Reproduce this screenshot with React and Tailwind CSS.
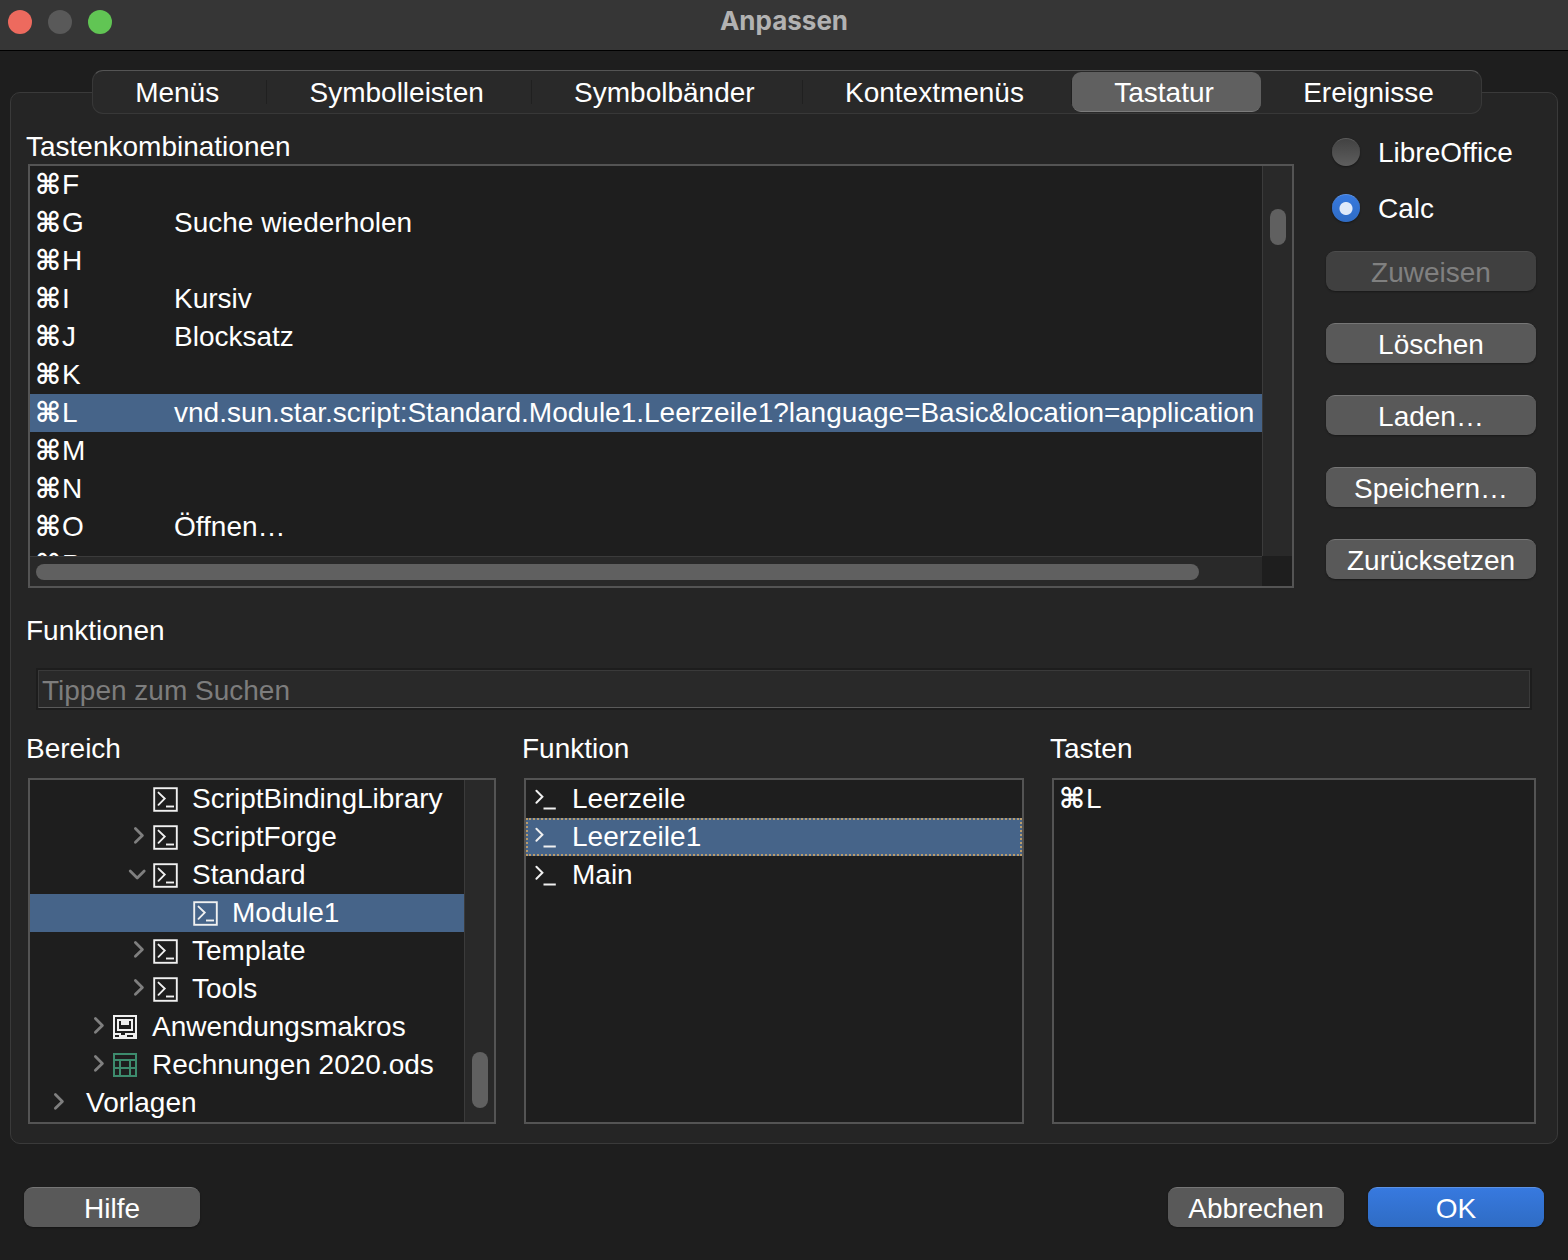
import { clsx } from 'clsx'

const tabs = ['Menüs', 'Symbolleisten', 'Symbolbänder', 'Kontextmenüs', 'Tastatur', 'Ereignisse']

const shortcuts = [
  { keys: 'F', action: '' },
  { keys: 'G', action: 'Suche wiederholen' },
  { keys: 'H', action: '' },
  { keys: 'I', action: 'Kursiv' },
  { keys: 'J', action: 'Blocksatz' },
  { keys: 'K', action: '' },
  {
    keys: 'L',
    action: 'vnd.sun.star.script:Standard.Module1.Leerzeile1?language=Basic&location=application',
    selected: true,
  },
  { keys: 'M', action: '' },
  { keys: 'N', action: '' },
  { keys: 'O', action: 'Öffnen…' },
  { keys: 'P', action: '' },
]

const tree = [
  { label: 'ScriptBindingLibrary', level: 2, icon: 'script' },
  { label: 'ScriptForge', level: 2, icon: 'script', chevron: 'right' },
  { label: 'Standard', level: 2, icon: 'script', chevron: 'down' },
  { label: 'Module1', level: 3, icon: 'script', selected: true },
  { label: 'Template', level: 2, icon: 'script', chevron: 'right' },
  { label: 'Tools', level: 2, icon: 'script', chevron: 'right' },
  { label: 'Anwendungsmakros', level: 1, icon: 'app', chevron: 'right' },
  { label: 'Rechnungen 2020.ods', level: 1, icon: 'sheet', chevron: 'right' },
  { label: 'Vorlagen', level: 0, chevron: 'right' },
]

const indents = ['pl-[15px]', 'pl-[55px]', 'pl-[95px]', 'pl-[135px]']

const functions = [{ label: 'Leerzeile' }, { label: 'Leerzeile1', selected: true }, { label: 'Main' }]

function Chevron({ dir }) {
  return (
    <svg className="size-6 shrink-0" viewBox="0 0 24 24" fill="none" stroke="#7f7f7f" strokeWidth="2.8" strokeLinecap="round" strokeLinejoin="round">
      {dir === 'right' && <path d="M10.4 3.6 17.4 10.4 10.4 17.2" />}
      {dir === 'down' && <path d="M5.2 8 12.2 15 19.2 8" />}
    </svg>
  )
}

function ScriptIcon() {
  return (
    <svg className="size-[26px] shrink-0" viewBox="0 0 26 26" fill="none" stroke="#f0f0f0">
      <rect x="1.2" y="2.2" width="22.6" height="22.6" strokeWidth="1.9" />
      <path d="M5.5 6.6 11.7 12.6 5.5 18.8" strokeWidth="1.9" strokeLinecap="round" />
      <path d="M13 20.5H21" strokeWidth="1.9" />
    </svg>
  )
}

function FunctionIcon() {
  return (
    <svg className="size-[26px] shrink-0" viewBox="0 0 26 26" fill="none" stroke="#f0f0f0" strokeWidth="2">
      <path d="M3.4 4.8 9.4 10.8 3.4 16.8" strokeLinecap="round" />
      <path d="M10.5 22.5H22.8" />
    </svg>
  )
}

function AppIcon() {
  return (
    <svg className="size-[26px] shrink-0" viewBox="0 0 26 26" shapeRendering="crispEdges">
      <rect y="1" width="24" height="24" fill="#f0f0f0" />
      <path d="M2 3h20v16H2z M4 5v12h16V5z" fill="#1e1e1e" fillRule="evenodd" />
      <path d="M6 7h2v4h8V7h2v8H6z" fill="#1e1e1e" />
      <path d="M8 19h4v2H8z M2 21h4v2H2z M14 21h6v2h-6z" fill="#1e1e1e" />
    </svg>
  )
}

function SheetIcon() {
  return (
    <svg className="size-[26px] shrink-0" viewBox="0 0 26 26" fill="none" stroke="#3d8b6d" strokeWidth="2" shapeRendering="crispEdges">
      <rect x="1" y="2" width="22" height="22" />
      <path d="M0 8H24M0 16H24M7 8V24M17 8V24" />
    </svg>
  )
}

const icons = { script: ScriptIcon, app: AppIcon, sheet: SheetIcon }

function Shortcut({ keys }) {
  return (
    <span className="flex items-center">
      <span className="w-7 text-center font-['DejaVu_Sans',sans-serif] text-[28px] font-bold">⌘</span>
      {keys}
    </span>
  )
}

function Button({ children, className, primary, disabled }) {
  return (
    <button
      type="button"
      disabled={disabled}
      className={clsx(
        'h-10 rounded-[9px] border-t pt-0.5 text-center leading-9 shadow-[0_1px_2px_rgba(0,0,0,0.35)]',
        primary && 'border-[#5c92e4] bg-linear-to-b from-[#3779df] to-[#2f6cc4] text-white',
        disabled && 'border-[#4c4c4c] bg-[#404040] text-[#808080]',
        !primary && !disabled && 'border-[#767676] bg-[#595959] text-white',
        className,
      )}
    >
      {children}
    </button>
  )
}

function Radio({ label, checked }) {
  return (
    <label className="flex h-[34px] items-center gap-[18px] pl-1.5">
      <input
        type="radio"
        name="scope"
        defaultChecked={checked}
        className="mb-0.5 size-7 appearance-none rounded-full border-t border-[#5c5c5c] bg-linear-to-b from-[#424242] to-[#5e5e5e] shadow-[0_1px_2px_rgba(0,0,0,0.4)] checked:border-[#5c92e4] checked:bg-[radial-gradient(circle,#dfe9f9_6px,transparent_7px),linear-gradient(#3779df,#2f6cc4)]"
      />
      {label}
    </label>
  )
}

export default function App() {
  return (
    <div className="flex min-h-screen flex-col bg-[#1e1e1e] font-['Liberation_Sans','DejaVu_Sans',sans-serif] text-[28px] leading-[34px] text-white">
      <header className="flex h-[51px] items-center border-b border-black bg-[#363636] px-2 pb-1.5">
        <div className="flex gap-4">
          <button type="button" aria-label="Schließen" className="size-6 rounded-full bg-[#ed6a5e]" />
          <button type="button" aria-label="Minimieren" className="size-6 rounded-full bg-[#595959]" />
          <button type="button" aria-label="Zoomen" className="size-6 rounded-full bg-[#61c554]" />
        </div>
        <h1 className="flex-1 pr-26 pb-0.5 text-center font-['Inter',sans-serif] text-[26px] font-bold text-[#b2b2b2]">Anpassen</h1>
      </header>

      <main className="flex flex-1 flex-col px-2.5 pt-[19px]">
        {/* Tab strip sits on the top edge of the panel */}
        <div role="tablist" className="z-10 mr-[76px] ml-[82px] flex h-11 rounded-[11px] border border-[#383838] border-t-[#545454] bg-[#292929]">
          {tabs.map((tab, i) => (
            <div key={tab} className="flex flex-auto items-center">
              <button
                type="button"
                role="tab"
                aria-selected={tab === 'Tastatur'}
                className={clsx('h-10 flex-auto rounded-[9px] pt-0.5 pr-11 pl-[39px]', tab === 'Tastatur' && 'border-b border-[#7c7c7c] bg-[#606060]')}
              >
                {tab}
              </button>
              {i < 4 && <span className="h-6 w-px bg-[#202020]" />}
            </div>
          ))}
        </div>

        <section className="-mt-[22px] rounded-[10px] border border-[#3a3a3a] bg-[#252525] pt-[37px] pr-[21px] pb-[19px] pl-[17px]">
          <div className="flex gap-8">
            <div className="min-w-0 flex-1">
              <h2 className="-ml-0.5">Tastenkombinationen</h2>
              <div className="border-2 border-[#545454] bg-[#1e1e1e]">
                <div className="flex h-[390px]">
                  <div className="min-w-0 flex-1 overflow-hidden">
                    <table className="w-full table-fixed">
                      <tbody>
                        {shortcuts.map((row) => (
                          <tr key={row.keys} className={clsx('h-[38px]', row.selected && 'bg-[#466489]')}>
                            <td className="w-36 pl-1">
                              <Shortcut keys={row.keys} />
                            </td>
                            <td className="whitespace-nowrap">{row.action}</td>
                          </tr>
                        ))}
                      </tbody>
                    </table>
                  </div>
                  <div className="w-[30px] border-l border-[#3b3b3b] bg-[#292929] pt-[43px] pl-[7px]">
                    <div className="h-9 w-4 rounded-full bg-[#606060]" />
                  </div>
                </div>
                <div className="mr-[30px] h-[30px] border-t border-[#3b3b3b] bg-[#292929] pt-[7px] pr-[63px] pl-1.5">
                  <div className="h-4 rounded-full bg-[#606060]" />
                </div>
              </div>
            </div>

            <div className="flex w-[210px] flex-col pt-1.5">
              <Radio label="LibreOffice" />
              <div className="mt-[22px]">
                <Radio label="Calc" checked />
              </div>
              <div className="mt-[25px] flex flex-col gap-8">
                <Button disabled>Zuweisen</Button>
                <Button>Löschen</Button>
                <Button>Laden…</Button>
                <Button>Speichern…</Button>
                <Button>Zurücksetzen</Button>
              </div>
            </div>
          </div>

          <label htmlFor="search" className="mt-[26px] -ml-0.5 block">
            Funktionen
          </label>
          <div className="mt-5 mr-1 ml-2 border-2 border-[#1d1d1d]">
            <input
              id="search"
              type="text"
              placeholder="Tippen zum Suchen"
              className="block h-[38px] w-full border border-[#3a3a3a] border-b-[#5a5a5a] bg-[#292929] pt-1 pl-[3px] outline-none placeholder:text-[#7d7d7d]"
            />
          </div>

          <div className="mt-[22px] grid grid-cols-[468fr_500fr_484fr] gap-7">
            <div>
              <h2 className="mb-3 -ml-0.5">Bereich</h2>
              <div className="flex h-[346px] border-2 border-[#545454] bg-[#1e1e1e]">
                <ul role="tree" aria-label="Bereich" className="min-w-0 flex-1">
                  {tree.map(({ label, level, icon, chevron, selected }) => {
                    const Icon = icons[icon]
                    return (
                      <li
                        key={label}
                        role="treeitem"
                        aria-selected={!!selected}
                        className={clsx('flex h-[38px] items-center whitespace-nowrap', indents[level], selected && 'bg-[#466489]')}
                      >
                        <Chevron dir={chevron} />
                        <span className="flex items-center gap-[13px] pl-1">
                          {Icon ? <Icon /> : <i />}
                          {label}
                        </span>
                      </li>
                    )
                  })}
                </ul>
                <div className="flex w-[30px] items-end border-l border-[#3b3b3b] bg-[#292929] pb-3.5 pl-[7px]">
                  <div className="h-14 w-4 rounded-full bg-[#606060]" />
                </div>
              </div>
            </div>

            <div>
              <h2 className="mb-3 -ml-0.5">Funktion</h2>
              <ul role="listbox" aria-label="Funktion" className="h-[346px] border-2 border-[#545454] bg-[#1e1e1e]">
                {functions.map(({ label, selected }) => (
                  <li
                    key={label}
                    role="option"
                    aria-selected={!!selected}
                    className={clsx(
                      'flex h-[38px] items-center gap-[13px] pl-[7px]',
                      selected && 'bg-[#466489] outline-2 -outline-offset-2 outline-dotted outline-[#b99b6b]',
                    )}
                  >
                    <FunctionIcon />
                    {label}
                  </li>
                ))}
              </ul>
            </div>

            <div>
              <h2 className="mb-3 -ml-0.5">Tasten</h2>
              <ul role="listbox" aria-label="Tasten" className="h-[346px] border-2 border-[#545454] bg-[#1e1e1e]">
                <li role="option" aria-selected={false} className="flex h-[38px] items-center pl-1">
                  <Shortcut keys="L" />
                </li>
              </ul>
            </div>
          </div>
        </section>
      </main>

      <footer className="flex gap-6 px-6 pt-[43px] pb-[33px]">
        <Button className="mr-auto w-44">Hilfe</Button>
        <Button className="w-44">Abbrechen</Button>
        <Button primary className="w-44">
          OK
        </Button>
      </footer>
    </div>
  )
}
